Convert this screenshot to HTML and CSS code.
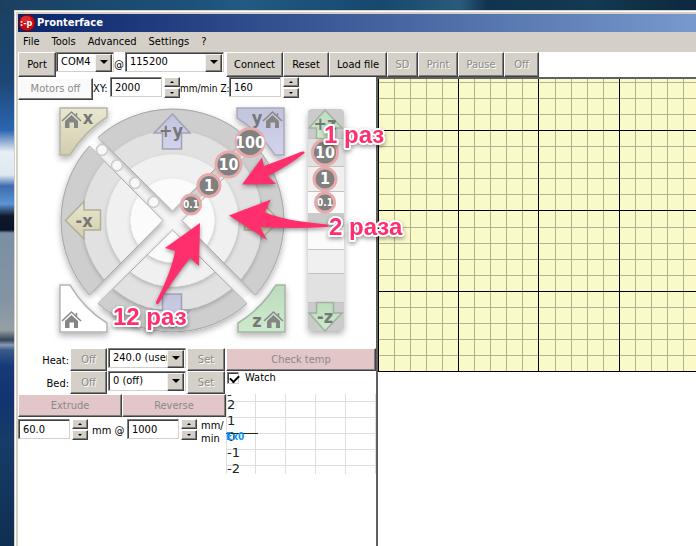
FILE: index.html
```
<!DOCTYPE html>
<html lang="en">
<head>
<meta charset="utf-8">
<title>Pronterface</title>
<link rel="stylesheet" href="styles.css">
</head>
<body>
<div class="window">
  <header class="titlebar">
    <svg class="logo" viewBox="0 0 18 18" aria-hidden="true">
      <circle cx="9" cy="9" r="8" fill="#c80c14" stroke="#7a0408"/>
      <ellipse cx="8" cy="5" rx="5" ry="3" fill="#f04048" opacity=".6"/>
      <text x="2" y="12" class="logo-text">:-p</text>
    </svg>
    <h1>Pronterface</h1>
  </header>
  <nav class="menu">
    <a href="#">File</a><a href="#">Tools</a><a href="#">Advanced</a><a href="#">Settings</a><a href="#">?</a>
  </nav>
  <div class="toolbar">
    <button class="btn w-port">Port</button>
    <span class="combo w-com"><select aria-label="Port"><option>COM4</option></select></span>
    <span class="at">@</span>
    <span class="combo w-baud"><select aria-label="Baud rate"><option>115200</option></select></span>
    <button class="btn w-connect">Connect</button>
    <button class="btn w-reset">Reset</button>
    <button class="btn w-load">Load file</button>
    <button class="btn w-sd" disabled>SD</button>
    <button class="btn w-print" disabled>Print</button>
    <button class="btn w-reset" disabled>Pause</button>
    <button class="btn w-off" disabled>Off</button>
  </div>
  <main class="panes">
    <section class="controls">
      <div class="feed">
        <button class="btn motors" disabled>Motors off</button>
        <label class="xy" for="xy">XY:</label>
        <input class="num" id="xy" value="2000">
        <span class="spin"><button class="up" aria-label="Increase XY"></button><button class="down" aria-label="Decrease XY"></button></span>
        <label class="z" for="z">mm/min Z:</label>
        <input class="num" id="z" value="160">
        <span class="spin"><button class="up" aria-label="Increase Z"></button><button class="down" aria-label="Decrease Z"></button></span>
      </div>
      <svg class="jog" viewBox="18 100 358 248" role="img" aria-label="Jog controls">
        <defs>
          <filter id="soft" x="-20%" y="-20%" width="140%" height="150%"><feDropShadow dx="0" dy="3" stdDeviation="3" flood-color="#000" flood-opacity=".3"/></filter>
          <filter id="ring" x="-20%" y="-20%" width="140%" height="140%"><feDropShadow dx="0" dy="2" stdDeviation="2" flood-color="#000" flood-opacity=".22"/></filter>
          <clipPath id="quads">
            <path d="M172.500 211L52.500 91H292.500ZM172.500 230L52.500 350H292.500ZM163 220.500L43 100.500V340.500ZM182 220.500L302 100.500V340.500Z"/>
          </clipPath>
          <linearGradient id="beige" x2="0" y2="1"><stop stop-color="#eae7d0"/><stop offset="1" stop-color="#d2cdac"/></linearGradient>
          <linearGradient id="blue" x2="0" y2="1"><stop stop-color="#c2c4dc"/><stop offset="1" stop-color="#d2d4ee"/></linearGradient>
          <linearGradient id="green" x2="0" y2="1"><stop stop-color="#bcdcbc"/><stop offset="1" stop-color="#cdeacd"/></linearGradient>
          <g id="house"><path d="M0 10L9.500 1L19 10M14.500 2V5" fill="none" stroke="#888" stroke-width="1.500"/><path d="M9.500 4L16 10V17H12V11.500H7.500V17H3V10Z" fill="#858585"/></g>
          <path id="wedge" d="M172.500 211L98 137.500A112 112 0 0 1 247 137.500Z"/>
        </defs>
        <circle cx="172.500" cy="220.500" r="106" fill="#f6f6f6"/>
        <g filter="url(#soft)">
          <g clip-path="url(#quads)">
            <circle cx="172.500" cy="220.500" r="112" fill="#cecece"/>
            <circle cx="172.500" cy="220.500" r="90" fill="#e1e1e1" filter="url(#ring)"/>
            <circle cx="172.500" cy="220.500" r="66" fill="#f0f0f0" filter="url(#ring)"/>
            <circle cx="172.500" cy="220.500" r="42" fill="#fbfbfb" filter="url(#ring)"/>
          </g>
        </g>
        <g fill="none" stroke="#a8a8a8">
          <use href="#wedge"/>
          <use href="#wedge" transform="rotate(90 172.500 220.500)"/>
          <use href="#wedge" transform="rotate(180 172.500 220.500)"/>
          <use href="#wedge" transform="rotate(270 172.500 220.500)"/>
        </g>
        <g fill="#f8f8f8" stroke="#cbcbcb" stroke-width="1.500">
          <circle cx="102" cy="150" r="5.500"/><circle cx="117" cy="165.500" r="5.500"/><circle cx="135" cy="183" r="5.500"/><circle cx="153.500" cy="202" r="5.500"/>
        </g>
        <g stroke-width="1.500" filter="url(#soft)">
          <path d="M60 108H107V117Q84 132 70 155H60Z" fill="url(#beige)" stroke="#b5b5a8"/>
          <path d="M284 108H237V118Q260 132 275 155H284Z" fill="url(#blue)" stroke="#a8aaba"/>
          <path d="M60 285H70Q84 309 107 323V332H60Z" fill="#fff" stroke="#b5b5b5"/>
          <path d="M285 285H276Q261 309 238 323V332H285Z" fill="url(#green)" stroke="#a5b5a5"/>
        </g>
        <g stroke-width="1.500">
          <path d="M172.500 114L190 133H181.500V149H162.500V133H154Z" fill="url(#blue)" stroke="#a0a2b4"/>
          <path d="M172.500 328L190 310H181.500V294H162.500V310H154Z" fill="url(#blue)" stroke="#a0a2b4"/>
          <path d="M65.500 220.500L84 201.500V210H100.500V230H84V239Z" fill="url(#beige)" stroke="#b0ae98"/>
          <path d="M279.500 220.500L261 201.500V210H244.500V230H261V239Z" fill="url(#beige)" stroke="#b0ae98"/>
        </g>
        <use href="#house" x="62" y="111"/><use href="#house" x="263" y="111"/><use href="#house" x="62" y="311"/><use href="#house" x="264" y="311"/>
        <g class="axis">
          <text x="88" y="124">x</text><text x="257" y="124">y</text><text x="257" y="327">z</text>
          <text x="171" y="137">+y</text><text x="84" y="227">-x</text>
        </g>
        <path d="M240 153L183 210" stroke="#d0d0d0" stroke-width="7"/>
        <g fill="#808080" stroke="#e5aaaa" stroke-width="3">
          <circle cx="191" cy="204.500" r="9.500"/><circle cx="209" cy="185.500" r="11"/><circle cx="228.500" cy="164.500" r="12.500"/><circle cx="250" cy="142.500" r="14"/>
        </g>
        <g class="badge">
          <text x="191" y="208" class="small">0.1</text><text x="209" y="191">1</text><text x="228.500" y="170">10</text><text x="250" y="148">100</text>
        </g>
        <g filter="url(#soft)">
          <rect x="308" y="109" width="36" height="222" rx="4" fill="#cbcbcb"/>
          <path d="M308 139h36v27h-36zM308 273h36v29h-36z" fill="#e1e1e1"/>
          <path d="M308 166h36v25h-36zM308 249h36v24h-36z" fill="#f0f0f0"/>
          <path d="M308 191h36v22h-36zM308 227h36v22h-36z" fill="#fbfbfb"/>
        </g>
        <path d="M308 138.500h36M308 166.500h36M308 191.500h36M308 249.500h36M308 273.500h36M308 302.500h36" stroke="#c2c2c2"/>
        <g fill="url(#green)" stroke="#9fb29f" stroke-width="1.500">
          <path d="M325 110L342 128H333.500V138.500H316.500V128H309Z"/>
          <path d="M325 331L342 313H333.500V302.500H316.500V313H309Z"/>
        </g>
        <g class="axis"><text x="325" y="130">+z</text><text x="325" y="323">-z</text></g>
        <g fill="#808080" stroke="#e5aaaa" stroke-width="3">
          <circle cx="325" cy="152.500" r="12.500"/><circle cx="325" cy="179" r="11"/><circle cx="325" cy="202.500" r="9.500"/>
        </g>
        <g class="badge"><text x="325" y="158">10</text><text x="325" y="184">1</text><text x="325" y="206" class="small">0.1</text></g>
      </svg>
      <div class="lower">
        <div class="heaters">
          <div class="heat-row">
            <label for="heat">Heat:</label>
            <button class="btn" disabled>Off</button>
            <span class="combo"><select id="heat"><option>240.0 (user</option></select></span>
            <button class="btn" disabled>Set</button>
          </div>
          <div class="heat-row">
            <label for="bed">Bed:</label>
            <button class="btn" disabled>Off</button>
            <span class="combo"><select id="bed"><option>0 (off)</option></select></span>
            <button class="btn" disabled>Set</button>
          </div>
          <div class="extrude">
            <button class="btn pink" disabled>Extrude</button>
            <button class="btn pink" disabled>Reverse</button>
          </div>
          <div class="amount">
            <input class="num" id="len" value="60.0">
            <span class="spin"><button class="up" aria-label="Increase length"></button><button class="down" aria-label="Decrease length"></button></span>
            <label class="mm" for="len">mm @</label>
            <input class="num" id="speed" value="1000">
            <span class="spin"><button class="up" aria-label="Increase speed"></button><button class="down" aria-label="Decrease speed"></button></span>
            <label class="unit" for="speed">mm/<br>min</label>
          </div>
        </div>
        <div class="temps">
          <button class="btn pink check" disabled>Check temp</button>
          <label class="watch"><input type="checkbox" checked>Watch</label>
          <svg class="graph" viewBox="0 0 150 80" role="img" aria-label="Temperature graph">
            <path d="M.5 0V80M29.500 0V80M59.500 0V80M89.500 0V80M119.500 0V80M149.500 0V80M0 7.500H150M0 23.500H150M0 39.500H150M0 55.500H150M0 71.500H150" stroke="#dedede"/>
            <path d="M0 39.500H32" stroke="#28280a"/>
            <g class="ticks"><text x="1" y="5">-</text><text x="1" y="15">2</text><text x="1" y="31">1</text><text x="1" y="47">0</text><text x="1" y="63">-1</text><text x="1" y="79">-2</text></g>
            <text class="series" x="0" y="46">Ex0</text>
          </svg>
        </div>
      </div>
    </section>
    <section class="preview">
      <svg class="bed" role="img" aria-label="Print bed">
        <rect width="100%" height="293" fill="#fafac8"/>
        <path stroke="#b2b292" d="M16.500 0V293M32.500 0V293M48.500 0V293M64.500 0V293M96.500 0V293M112.500 0V293M128.500 0V293M144.500 0V293M177.500 0V293M193.500 0V293M209.500 0V293M225.500 0V293M257.500 0V293M273.500 0V293M289.500 0V293M305.500 0V293M0 3.500H2000M0 19.500H2000M0 35.500H2000M0 67.500H2000M0 83.500H2000M0 99.500H2000M0 115.500H2000M0 148.500H2000M0 164.500H2000M0 180.500H2000M0 196.500H2000M0 228.500H2000M0 244.500H2000M0 260.500H2000M0 276.500H2000"/>
        <path stroke="#000" d="M.5 0V293M80.500 0V293M160.500 0V293M241.500 0V293M321.500 0V293M0 51.500H2000M0 131.500H2000M0 212.500H2000M0 292.500H2000"/>
      </svg>
    </section>
  </main>
</div>
<svg class="notes" viewBox="0 0 420 340">
  <g fill="#ff2f6e">
    <path d="M242 184.500L262 157.500L264 166Q283 159 302 151.500Q306 151 304 153.500Q288 166 268 176L276 184Z"/>
    <path d="M229 215.500L271 199.500L265 212Q280 220 327 224.500Q330 226 327 227Q290 229 260 227L267 240Z"/>
    <path d="M200 223L165 248L175 251Q172 270 156 302Q156 306 159 303Q172 281 190 258L199 266Z"/>
  </g>
  <g class="note"><text x="324" y="143">1 раз</text><text x="329" y="235">2 раза</text><text x="113" y="325">12 раз</text></g>
</svg>
</body>
</html>
```
FILE: styles.css
```
* { box-sizing: border-box; }
body {
  margin: 0;
  position: relative;
  min-height: 100vh;
  padding: 10px 0 0 14px;
  overflow: hidden;
  font: 11px/14px "DejaVu Sans Condensed", "DejaVu Sans", sans-serif;
  color: #000;
  background:
    linear-gradient(90deg, #1b405f, #1c4f78 25%, #215a82 35%, #17486e 55%, #2a5a7c 66%, #103450 70%, #123a50 85%, #0d2740) 0 0 / 100% 10px no-repeat,
    linear-gradient(#1b405f, #1c4674 80px, #2b66b0 130px, #e8eef4 152px, #dfe8f2 175px, #3c6cae 186px, #5c94d4 204px, #10182a 216px, #0a1428 230px, #7a8fa5 233px, #8494a4 300px, #94a0a4 330px, #34445a 340px, #8a9ab0 345px, #3a5a8a 350px, #163a78 366px, #123470 400px, #163c68 440px, #0f2f50 546px);
}
.window {
  min-height: calc(100vh - 10px);
  display: flex;
  flex-direction: column;
  padding: 3px 0 0 3px;
  background: #d4d0c8;
  border: solid #d4d0c8;
  border-width: 1px 0 0 1px;
  box-shadow: inset 1px 1px #fff;
}
button, input, select { font: inherit; color: inherit; margin: 0; border-radius: 0; }
.titlebar {
  display: flex;
  align-items: center;
  height: 18px;
  background: linear-gradient(90deg, #0a246a, #7799cc);
}
.titlebar h1 { margin: 0 0 0 1px; font-size: 11px; line-height: 18px; color: #fff; }
.logo { width: 18px; height: 18px; }
.logo-text { font-size: 9px; font-weight: bold; fill: #fff; }
.menu {
  display: flex;
  gap: 12px;
  height: 20px;
  padding-left: 5px;
  background: #d4d0c8;
}
.menu a { color: #000; text-decoration: none; line-height: 20px; }
.toolbar { display: flex; align-items: flex-start; height: 25px; background: #fff; }
.btn {
  flex: none;
  height: 25px;
  padding: 0;
  text-align: center;
  background: #d4d0c8;
  border: 1px solid;
  border-color: #fff #404040 #404040 #fff;
  box-shadow: inset -1px -1px #808080;
}
.btn:disabled { color: #8a8a86; text-shadow: 1px 1px #fff; }
.btn.pink:disabled { background: #e2c6c8; text-shadow: none; }
.w-port { width: 38px; }
.w-com { width: 58px; }
.at { width: 11px; line-height: 25px; }
.w-baud { width: 99px; margin-right: 2px; }
.w-connect { width: 57px; }
.w-reset { width: 46px; }
.w-load { width: 58px; }
.w-sd { width: 31px; }
.w-print { width: 40px; }
.w-off { width: 35px; }
.combo { position: relative; display: block; flex: none; height: 20px; }
.combo select {
  appearance: none;
  width: 100%;
  height: 20px;
  padding: 0 17px 0 4px;
  background: #fff;
  border: 1px solid;
  border-color: #808080 #d4d0c8 #d4d0c8 #808080;
  box-shadow: inset 1px 1px #404040;
}
.combo::before {
  content: "";
  position: absolute;
  top: 2px;
  right: 2px;
  width: 15px;
  height: 16px;
  background: #d4d0c8;
  border: 1px solid;
  border-color: #f4f2ee #404040 #404040 #f4f2ee;
  box-shadow: inset -1px -1px #808080;
  pointer-events: none;
}
.combo::after {
  content: "";
  position: absolute;
  top: 8px;
  right: 6px;
  border: 4px solid transparent;
  border-top-color: #000;
  border-bottom: 0;
  pointer-events: none;
}
.panes { display: flex; flex: 1; background: #fff; }
.controls { width: 358px; flex: none; }
.feed { display: flex; height: 23px; }
.feed label { line-height: 24px; white-space: nowrap; }
.motors { width: 75px; height: 22px; margin-top: 1px; background: #fafafa; }
.xy { width: 17px; }
.feed .z { width: 49px; font-size: 10px; }
.num {
  flex: none;
  width: 52px;
  height: 20px;
  padding: 0 4px;
  background: #fff;
  border: 1px solid;
  border-color: #808080 #d4d0c8 #d4d0c8 #808080;
  box-shadow: inset 1px 1px #404040;
}
.spin { display: flex; flex: none; flex-direction: column; gap: 1px; width: 16px; margin-left: 2px; }
.spin button {
  display: flex;
  align-items: center;
  justify-content: center;
  height: 10px;
  padding: 0;
  background: #d4d0c8;
  border: 1px solid;
  border-color: #fff #404040 #404040 #fff;
  box-shadow: inset -1px -1px #808080;
}
.spin button::before { content: ""; border: 2px solid transparent; }
.spin .up::before { border-bottom-color: #000; border-top: 0; }
.spin .down::before { border-top-color: #000; border-bottom: 0; }
.jog { display: block; width: 100%; }
.axis { font-size: 18px; font-weight: bold; fill: #777; text-anchor: middle; }
.badge { font-size: 16px; font-weight: bold; fill: #fff; text-anchor: middle; }
.badge .small { font-size: 10px; }
.lower { display: flex; }
.heaters { width: 208px; flex: none; }
.heat-row { display: grid; grid-template-columns: 50px 37px 78px 38px; column-gap: 1px; height: 23px; margin-left: 1px; }
.heat-row label { line-height: 25px; text-align: right; }
.heat-row .btn { height: 23px; }
.extrude { display: grid; grid-template-columns: 1fr 1fr; height: 25px; }
.extrude .btn { height: 23px; }
.amount { display: flex; height: 26px; }
.mm { width: 39px; padding-left: 4px; line-height: 24px; }
.unit { padding-left: 4px; line-height: 13px; }
.temps { flex: 1; display: flex; flex-direction: column; }
.check { height: 23px; }
.watch { display: flex; align-items: center; gap: 6px; height: 14px; margin: 0 0 9px 1px; }
.watch input {
  appearance: none;
  width: 12px;
  height: 12px;
  background: #fff;
  border: 1px solid;
  border-color: #808080 #d4d0c8 #d4d0c8 #808080;
  box-shadow: inset 1px 1px #404040;
}
.watch input:checked::before {
  content: "";
  display: block;
  width: 7px;
  height: 4px;
  margin: 2px 0 0 2px;
  border: solid #000;
  border-width: 0 0 2px 2px;
  transform: rotate(-45deg);
}
.graph { display: block; width: 100%; overflow: hidden; }
.ticks { font: 13px "DejaVu Sans", sans-serif; fill: #142828; }
.series { font: bold 10px "DejaVu Sans Condensed", sans-serif; fill: #0a96ff; }
.preview {
  flex: 1;
  min-width: 0;
  border: solid #606060;
  border-width: 2px 0 0 2px;
}
.bed { display: block; width: 100%; height: 293px; shape-rendering: crispEdges; }
.notes { position: absolute; top: 0; left: 0; width: 420px; pointer-events: none; filter: drop-shadow(0 2px 2px rgba(0, 0, 0, .4)); }
.note {
  font: bold 24px "Liberation Sans", Arial, sans-serif;
  fill: #ff2f6e;
  stroke: #fff;
  stroke-width: 4px;
  stroke-linejoin: round;
  paint-order: stroke;
}
```
